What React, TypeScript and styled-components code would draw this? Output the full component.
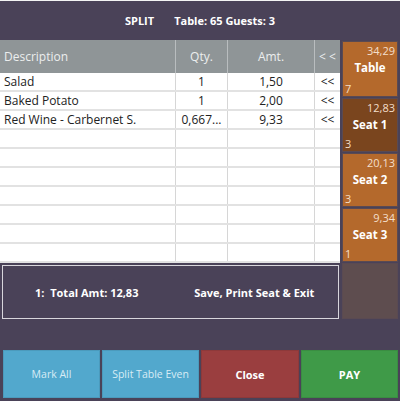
import React from "react";
import styled, { createGlobalStyle } from "styled-components";

const Global = createGlobalStyle`
  html, body { margin: 0; padding: 0; background: #4a4258; }
  body { font-family: "Open Sans", "Noto Sans", sans-serif; }
  * { box-sizing: border-box; }
`;

const Page = styled.div`
  width: 400px;
  height: 401px;
  background: #4a4258;
  display: flex;
  flex-direction: column;
  overflow: hidden;
`;

const TopStrip = styled.div`
  height: 1px;
  background: #f4f4f4;
`;

const Header = styled.div`
  height: 39px;
  display: flex;
  align-items: center;
  justify-content: center;
  gap: 20px;
  color: #ffffff;
  font-weight: 700;
  font-size: 11px;
`;

const Main = styled.div`
  display: flex;
  height: 279px;
`;

const LeftCol = styled.div`
  width: 340px;
  display: flex;
  flex-direction: column;
`;

const Table = styled.div`
  background: #ffffff;
  height: 223px;
  display: flex;
  flex-direction: column;
`;

const cols = "175px 52px 87px 26px";

const HeadRow = styled.div`
  display: grid;
  grid-template-columns: ${cols};
  height: 33px;
  background: #8f9597;
  color: #eceeee;
  font-size: 12px;
`;

const HeadCell = styled.div<{ $align?: string }>`
  display: flex;
  align-items: center;
  justify-content: ${(p) => p.$align || "center"};
  padding-left: ${(p) => (p.$align === "flex-start" ? "4px" : "0")};
  border-left: 1px solid #b9bdbf;
  &:first-child { border-left: none; }
`;

const Row = styled.div`
  display: grid;
  grid-template-columns: ${cols};
  height: 19px;
  color: #222;
  font-size: 12px;
  border-bottom: 2px solid #e2e2e2;
`;

const Cell = styled.div<{ $align?: string }>`
  display: flex;
  align-items: center;
  justify-content: ${(p) => p.$align || "center"};
  padding-left: ${(p) => (p.$align === "flex-start" ? "4px" : "0")};
  border-left: 1px solid #d6d6d6;
  white-space: nowrap;
  overflow: hidden;
  &:first-child { border-left: none; }
`;

const TotalBar = styled.div`
  margin: 2px 1px 0 2px;
  height: 54px;
  border: 1px solid #d8d6dc;
  display: grid;
  grid-template-columns: 1fr 1fr;
  align-items: center;
  color: #fff;
  font-weight: 700;
  font-size: 11px;
  text-align: center;
  white-space: pre;
`;

const RightCol = styled.div`
  width: 60px;
  padding: 1px 2px 0 2px;
  display: flex;
  flex-direction: column;
  gap: 1px;
`;

const SeatBtn = styled.div<{ $bg: string; $h: number }>`
  height: ${(p) => p.$h}px;
  background: ${(p) => p.$bg};
  border: 1px solid #5a4a52;
  display: flex;
  flex-direction: column;
  color: #f3dfcb;
  font-size: 11px;
  padding: 1px 2px 0 2px;
`;

const SeatAmt = styled.div`
  text-align: right;
  line-height: 15px;
`;

const SeatName = styled.div`
  text-align: center;
  color: #ffffff;
  font-weight: 700;
  font-size: 11.5px;
  line-height: 20px;
  flex: 1;
`;

const SeatCount = styled.div`
  line-height: 15px;
`;

const EmptyBtn = styled.div`
  height: 56px;
  background: #5e4d4f;
  border: 1px solid #5a4a52;
`;

const Bottom = styled.div`
  flex: 1;
  padding: 31px 2px 3px 3px;
  display: grid;
  grid-template-columns: 97px 97px 98px 97px;
  gap: 2px;
`;

const ActionBtn = styled.div<{ $bg: string; $bold?: boolean }>`
  background: ${(p) => p.$bg};
  color: ${(p) => (p.$bold ? "#ffffff" : "#d8ecf5")};
  font-weight: ${(p) => (p.$bold ? 700 : 400)};
  font-size: ${(p) => (p.$bold ? "11px" : "10.5px")};
  display: flex;
  align-items: center;
  justify-content: center;
  border: 1px solid rgba(0,0,0,0.08);
`;

const items = [
  { d: "Salad", q: "1", a: "1,50" },
  { d: "Baked Potato", q: "1", a: "2,00" },
  { d: "Red Wine - Carbernet S.", q: "0,667...", a: "9,33" },
];

const seats = [
  { amt: "34,29", name: "Table", n: "7", bg: "#b4692c", h: 56 },
  { amt: "12,83", name: "Seat 1", n: "3", bg: "#7a451e", h: 55 },
  { amt: "20,13", name: "Seat 2", n: "3", bg: "#b4692c", h: 54 },
  { amt: "9,34", name: "Seat 3", n: "1", bg: "#b4692c", h: 55 },
];

export default function App() {
  const rows = Array.from({ length: 10 }, (_, i) => items[i]);
  return (
    <Page>
      <Global />
      <TopStrip />
      <Header>
        <span>SPLIT</span>
        <span>Table: 65 Guests: 3</span>
      </Header>
      <Main>
        <LeftCol>
          <Table>
            <HeadRow>
              <HeadCell $align="flex-start">Description</HeadCell>
              <HeadCell>Qty.</HeadCell>
              <HeadCell>Amt.</HeadCell>
              <HeadCell>&lt; &lt;</HeadCell>
            </HeadRow>
            {rows.map((r, i) => (
              <Row key={i}>
                <Cell $align="flex-start">{r ? r.d : ""}</Cell>
                <Cell>{r ? r.q : ""}</Cell>
                <Cell>{r ? r.a : ""}</Cell>
                <Cell>{r ? "<<" : ""}</Cell>
              </Row>
            ))}
          </Table>
          <TotalBar>
            <span>{"1:  Total Amt: 12,83"}</span>
            <span>Save, Print Seat &amp; Exit</span>
          </TotalBar>
        </LeftCol>
        <RightCol>
          {seats.map((s) => (
            <SeatBtn key={s.name} $bg={s.bg} $h={s.h}>
              <SeatAmt>{s.amt}</SeatAmt>
              <SeatName>{s.name}</SeatName>
              <SeatCount>{s.n}</SeatCount>
            </SeatBtn>
          ))}
          <EmptyBtn />
        </RightCol>
      </Main>
      <Bottom>
        <ActionBtn $bg="#52a8cd">Mark All</ActionBtn>
        <ActionBtn $bg="#52a8cd">Split Table Even</ActionBtn>
        <ActionBtn $bg="#9a3e3f" $bold>Close</ActionBtn>
        <ActionBtn $bg="#3f9a48" $bold>PAY</ActionBtn>
      </Bottom>
    </Page>
  );
}
